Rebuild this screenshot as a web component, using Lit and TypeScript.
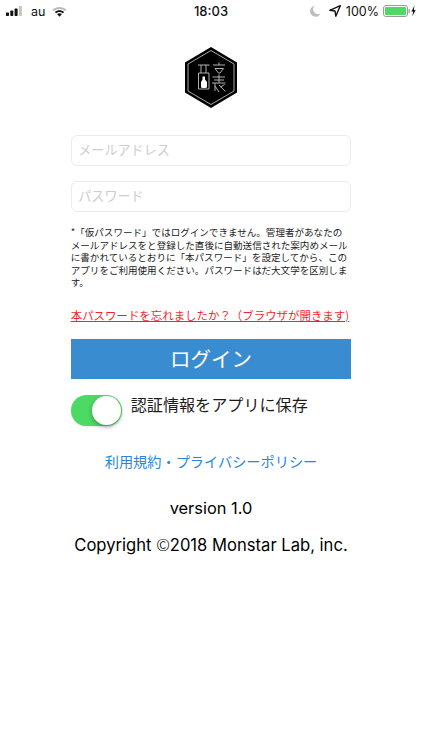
import { LitElement, html, css, svg } from "lit";
import { customElement } from "lit/decorators.js";

@customElement("app-root")
export class AppRoot extends LitElement {
  static styles = css`
    :host {
      display: block;
      width: 422px;
      height: 750px;
      background: #fff;
      color: #000;
      font-family: "Noto Sans CJK JP", "Noto Sans", sans-serif;
      overflow: hidden;
    }
    .status {
      height: 22px;
      display: grid;
      grid-template-columns: 1fr auto 1fr;
      align-items: center;
      font-family: "Inter", "Liberation Sans", sans-serif;
      font-size: 12.5px;
      color: #111;
      padding: 0 6px;
    }
    .left, .right { display: flex; align-items: center; }
    .left { gap: 6px; }
    .right { justify-content: flex-end; gap: 5px; }
    .time { font-weight: 500; font-size: 13px; }
    .main {
      display: flex;
      flex-direction: column;
      width: 280.5px;
      margin-left: 70.75px;
    }
    .logo { align-self: center; margin-top: 25px; display: block; }
    .field {
      box-sizing: border-box;
      height: 31px;
      border: 1px solid #ececec;
      border-radius: 6px;
      padding: 0 6.5px;
      font-size: 13.1px;
      line-height: 27px;
      color: #cdcdd0;
      white-space: nowrap;
    }
    .field.first { margin-top: 27px; }
    .field.second { margin-top: 15px; }
    .note {
      margin: 14px 0 0;
      font-size: 9.55px;
      line-height: 12.5px;
      color: #222;
    }
    .forgot {
      margin-top: 18px;
      font-size: 11.45px;
      line-height: 16px;
      color: #fc1f2c;
      text-decoration: underline;
      white-space: nowrap;
    }
    .login {
      margin-top: 16px;
      height: 40px;
      background: #3a8cd0;
      color: #fff;
      font-size: 20.5px;
      line-height: 39px;
      text-align: center;
    }
    .remember {
      display: flex;
      align-items: flex-start;
      gap: 8.5px;
      margin-top: 16px;
    }
    .toggle {
      position: relative;
      width: 51.5px;
      height: 31.5px;
      border-radius: 16px;
      background: #4cd964;
      flex: none;
      box-shadow: 0 1px 2px rgba(0, 0, 0, 0.1);
    }
    .knob {
      position: absolute;
      top: 1.5px;
      right: 1.5px;
      width: 28.5px;
      height: 28.5px;
      border-radius: 50%;
      background: #fff;
      box-shadow: 0 2px 4px rgba(0, 0, 0, 0.3);
    }
    .remember span {
      font-size: 16.1px;
      line-height: 20px;
      margin-top: -1px;
      color: #1c1c1c;
      white-space: nowrap;
    }
    .terms {
      margin-top: 25px;
      font-size: 14.2px;
      line-height: 20px;
      color: #2a86d6;
      text-align: center;
      white-space: nowrap;
    }
    .version {
      margin-top: 27px;
      font-size: 16.4px;
      line-height: 20px;
      text-align: center;
      font-family: "Inter", "Noto Sans", sans-serif;
    }
    .copy {
      margin-top: 16px;
      font-size: 16.6px;
      line-height: 20px;
      text-align: center;
      white-space: nowrap;
      font-family: "Inter", "Noto Sans", sans-serif;
    }
    .copy .c {
      font-family: "Noto Sans CJK JP", sans-serif;
      font-weight: 300;
    }
  `;

  private logo() {
    return svg`<svg class="logo" width="52" height="61" viewBox="0 0 52 61">
      <polygon points="26,0 52,15.5 52,45.5 26,61 0,45.5 0,15.5" fill="#000"/>
      <polygon points="26,3.5 49,17 49,44 26,57.5 3,44 3,17" fill="none" stroke="#cfcfcf" stroke-width="0.8"/>
      <g stroke="#c4c4c4" stroke-width="0.9" fill="none">
        <path d="M13 18H24.5M16 18V26M21 18V26M13.5 26H24V42H13.5Z"/>
        <path d="M28 18H40M34 15.5V18M30 21.5H38.5L35 26H33.5Z"/>
        <path d="M27.5 30H40M34 27.5V36M29 33H39M27 36H40.5M30 36V44M30 39L34 45M34 38L40.5 44.5M39.5 37.5L35.5 40"/>
      </g>
      <path d="M17.5 29.5H20V32.5L22 35V39.5Q22 41 20.5 41H17.5Q16 41 16 39.5V35L17.5 32.5Z" fill="#fff"/>
    </svg>`;
  }

  render() {
    return html`
      <div class="status">
        <div class="left">
          <svg width="19" height="10" viewBox="0 0 19 10">
            <rect x="0" y="6.5" width="3" height="3.5" rx="0.7" fill="#111"/>
            <rect x="4.3" y="4.5" width="3" height="5.5" rx="0.7" fill="#111"/>
            <rect x="8.6" y="2.5" width="3" height="7.5" rx="0.7" fill="#111"/>
            <rect x="12.9" y="0" width="3" height="10" rx="0.7" fill="#c4c4c4"/>
          </svg>
          <span>au</span>
          <svg width="15" height="11" viewBox="0 0 15 11" style="margin-left:1px">
            <path d="M0.5 3.6C4.3 0 10.7 0 14.5 3.6L13.2 5C10.1 2.2 4.9 2.2 1.8 5Z" fill="#bbb"/>
            <path d="M2.8 5.9C5.4 3.6 9.6 3.6 12.2 5.9L10.9 7.3C9 5.7 6 5.7 4.1 7.3Z" fill="#111"/>
            <path d="M5 8.1C6.4 7 8.6 7 10 8.1L7.5 10.8Z" fill="#111"/>
          </svg>
        </div>
        <div class="time">18:03</div>
        <div class="right">
          <svg width="11" height="12" viewBox="0 0 11 12">
            <path d="M4.5 0.8A5.5 5.5 0 1 0 10.5 8.6A5 5 0 0 1 4.5 0.8Z" fill="#bdbdbd"/>
          </svg>
          <svg width="12" height="12" viewBox="0 0 12 12" style="margin-left:3px">
            <path d="M11.3 0.7L0.8 5.3L6 6L6.8 11.2Z" fill="none" stroke="#111" stroke-width="1.4" stroke-linejoin="round"/>
          </svg>
          <span>100%</span>
          <svg width="33" height="12" viewBox="0 0 33 12" style="margin-left:-1px">
            <rect x="0.5" y="0.5" width="24" height="11" rx="2.5" fill="none" stroke="#9a9a9a"/>
            <rect x="2" y="2" width="21" height="8" rx="1.2" fill="#4cd964"/>
            <rect x="25.5" y="4" width="1.3" height="4" rx="0.6" fill="#9a9a9a"/>
            <path d="M31.5 0.8L28.3 6.6H30.2L29.3 11.2L32.7 5H30.8Z" fill="#111"/>
          </svg>
        </div>
      </div>
      <div class="main">
        ${this.logo()}
        <div class="field first">メールアドレス</div>
        <div class="field second">パスワード</div>
        <p class="note">*「仮パスワード」ではログインできません。管理者があなたのメールアドレスをと登録した直後に自動送信された案内めメールに書かれているとおりに「本パスワード」を設定してから、このアプリをご利用使用ください。パスワードはだ大文学を区別します。</p>
        <div class="forgot">本パスワードを忘れましたか？（ブラウザが開きます)</div>
        <div class="login">ログイン</div>
        <div class="remember">
          <div class="toggle"><div class="knob"></div></div>
          <span>認証情報をアプリに保存</span>
        </div>
        <div class="terms">利用規約・プライバシーポリシー</div>
        <div class="version">version 1.0</div>
        <div class="copy">Copyright <span class="c">©</span>2018 Monstar Lab, inc.</div>
      </div>
    `;
  }
}
